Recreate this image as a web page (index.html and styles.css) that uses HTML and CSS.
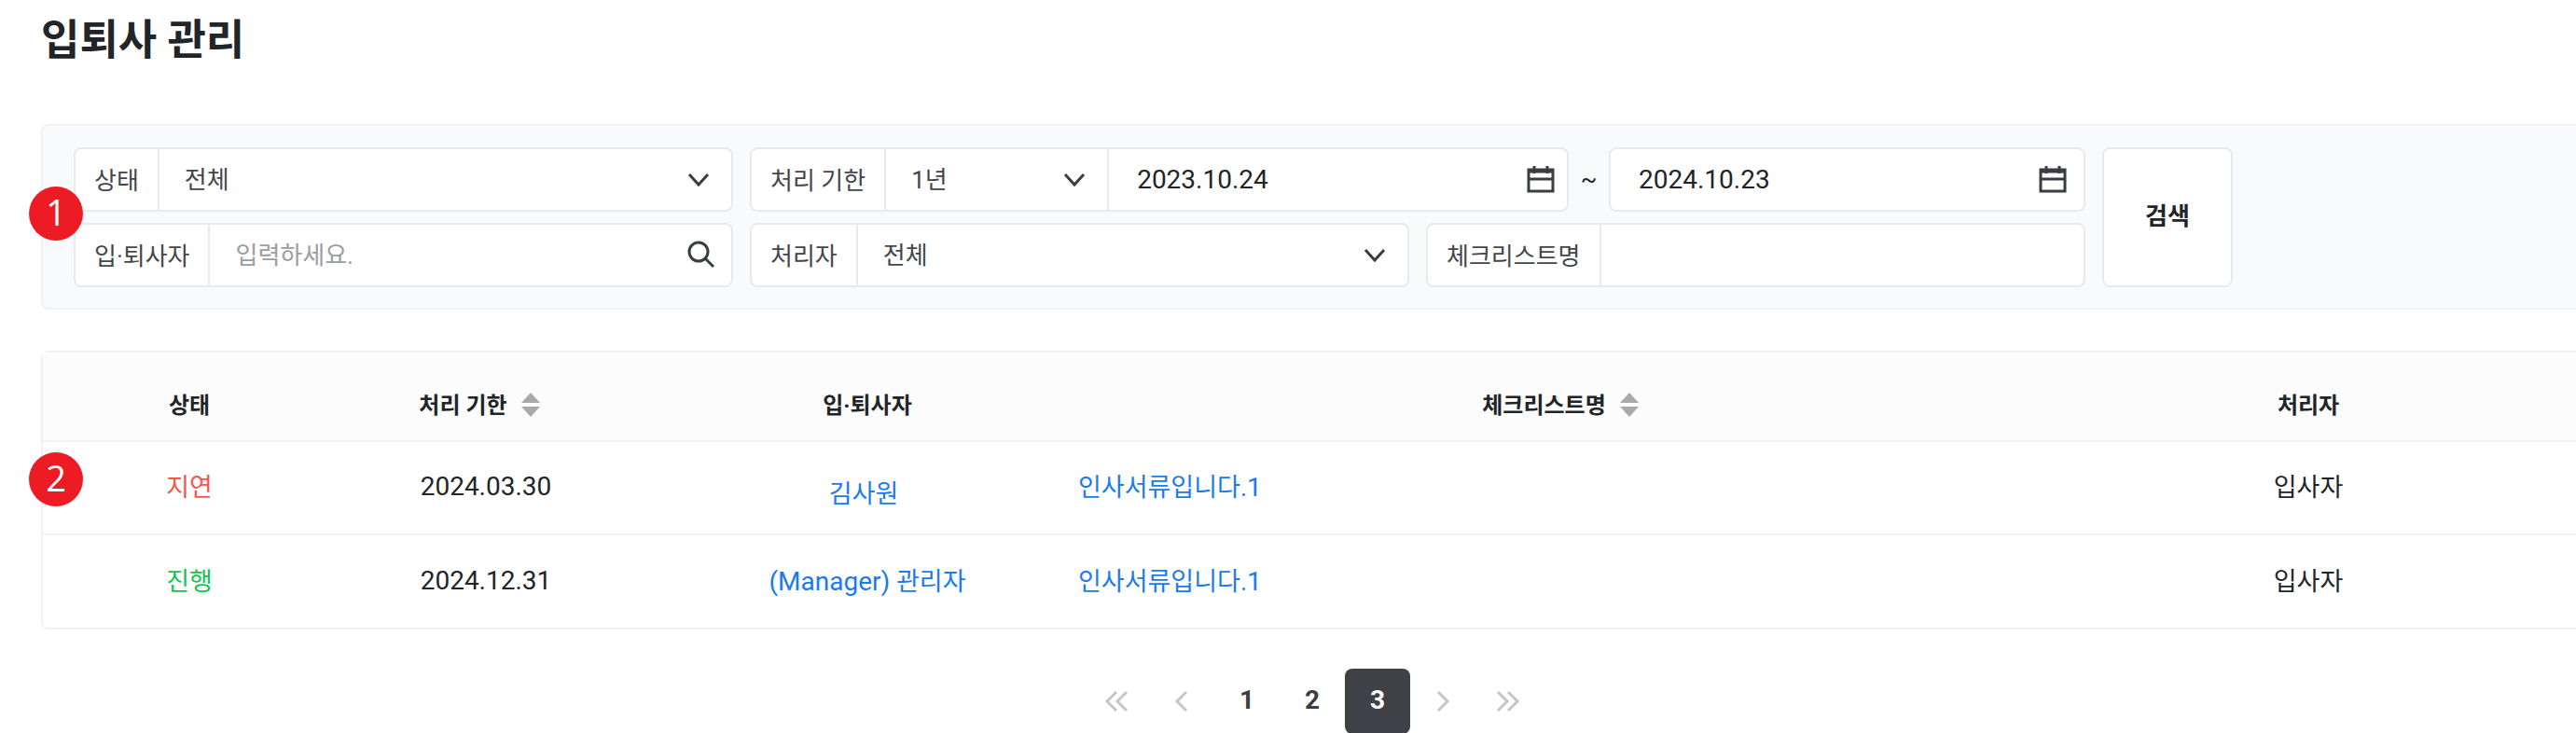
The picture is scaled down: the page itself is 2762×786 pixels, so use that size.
FILE: index.html
```html
<!DOCTYPE html>
<html lang="ko">
<head>
  <meta charset="UTF-8" />
  <meta name="viewport" content="width=device-width, initial-scale=1.0"/>
  <title>입퇴사 관리</title>
  <link rel="stylesheet" href="styles.css">
</head>
<body>

  <main class="page">
    <h1>입퇴사 관리</h1>

    <!-- Search filter -->
    <form class="filter">
      <span class="badge">1</span>
      <div class="filter-grid">
        <div class="field">
          <label for="status">상태</label>
          <div class="control">
            <select id="status"><option>전체</option></select>
            <svg class="chevron" viewBox="0 0 24 24"><path d="M2 6l10 11L22 6"/></svg>
          </div>
        </div>

        <div class="period">
          <div class="field">
            <label for="period">처리 기한</label>
            <div class="control period-select">
              <select id="period"><option>1년</option></select>
              <svg class="chevron" viewBox="0 0 24 24"><path d="M2 6l10 11L22 6"/></svg>
            </div>
            <div class="control">
              <input class="date" type="text" value="2023.10.24" aria-label="시작일">
              <svg class="calendar" viewBox="0 0 32 32"><path d="M3 5h26v23H3zM3 15h26M9 1v8M23 1v8M3 7h26"/></svg>
            </div>
          </div>
          <span class="tilde">~</span>
          <div class="field end-date">
            <div class="control">
              <input class="date" type="text" value="2024.10.23" aria-label="종료일">
              <svg class="calendar" viewBox="0 0 32 32"><path d="M3 5h26v23H3zM3 15h26M9 1v8M23 1v8M3 7h26"/></svg>
            </div>
          </div>
        </div>

        <div class="field">
          <label for="employee">입·퇴사자</label>
          <div class="control">
            <input id="employee" type="text" placeholder="입력하세요.">
            <svg class="search" viewBox="0 0 32 32"><circle cx="14" cy="12" r="10"/><path d="M21 19l9 9"/></svg>
          </div>
        </div>

        <div class="field">
          <label for="handler">처리자</label>
          <div class="control">
            <select id="handler"><option>전체</option></select>
            <svg class="chevron" viewBox="0 0 24 24"><path d="M2 6l10 11L22 6"/></svg>
          </div>
        </div>

        <div class="field">
          <label for="checklist">체크리스트명</label>
          <div class="control">
            <input id="checklist" type="text">
          </div>
        </div>
      </div>
      <button class="search-btn" type="button">검색</button>
    </form>

    <!-- Result list -->
    <div class="list">
      <span class="badge">2</span>
      <table>
        <colgroup>
          <col class="col-status">
          <col class="col-date">
          <col class="col-name">
          <col>
          <col class="col-handler">
        </colgroup>
        <thead>
          <tr>
            <th>상태</th>
            <th class="due">처리 기한<svg class="sort" viewBox="0 0 20 26"><path d="M10 0l10 11H0zM10 26l10-11H0z"/></svg></th>
            <th>입·퇴사자</th>
            <th>체크리스트명<svg class="sort" viewBox="0 0 20 26"><path d="M10 0l10 11H0zM10 26l10-11H0z"/></svg></th>
            <th>처리자</th>
          </tr>
        </thead>
        <tbody>
          <tr>
            <td class="late">지연</td>
            <td class="num">2024.03.30</td>
            <td class="name"><a href="#">김사원</a></td>
            <td class="title"><a href="#">인사서류입니다.<span class="num">1</span></a></td>
            <td>입사자</td>
          </tr>
          <tr>
            <td class="progress">진행</td>
            <td class="num">2024.12.31</td>
            <td><a href="#"><span class="num">(Manager)</span> 관리자</a></td>
            <td class="title"><a href="#">인사서류입니다.<span class="num">1</span></a></td>
            <td>입사자</td>
          </tr>
        </tbody>
      </table>
    </div>

    <!-- Pagination -->
    <nav class="paging" aria-label="페이지">
      <button type="button" aria-label="처음"><svg viewBox="0 0 26 24"><path d="M13 2L3 12l10 10M24 2L14 12l10 10"/></svg></button>
      <button type="button" aria-label="이전"><svg viewBox="0 0 26 24"><path d="M18 2L8 12l10 10"/></svg></button>
      <button type="button">1</button>
      <button type="button">2</button>
      <button type="button" class="active">3</button>
      <button type="button" aria-label="다음"><svg viewBox="0 0 26 24"><path d="M8 2l10 10L8 22"/></svg></button>
      <button type="button" aria-label="마지막"><svg viewBox="0 0 26 24"><path d="M2 2l10 10L2 22M13 2l10 10-10 10"/></svg></button>
    </nav>
  </main>

</body>
</html>
```
FILE: styles.css
```css
* { margin: 0; padding: 0; box-sizing: border-box; }
body {
  font-family: Roboto, "Noto Sans CJK KR", sans-serif;
  font-size: 26px;
  color: #212529;
  background: #fff;
  overflow: hidden;
}
a { color: #1a7af0; text-decoration: none; }
svg { fill: none; stroke: #3a3d42; stroke-width: 3; }

.page {
  padding-left: 44px;
  margin-right: -8px;
}

h1 {
  font-size: 45px;
  line-height: 68px;
  padding-top: 10px;
  margin-bottom: 55px;
}

/* Numbered markers on the left edge */
.badge {
  position: absolute;
  left: -15px;
  width: 58px;
  height: 58px;
  border-radius: 50%;
  background: #ed1c24;
  color: #fff;
  font-family: "Open Sans", sans-serif;
  font-size: 38px;
  line-height: 54px;
  text-align: center;
}

.filter {
  position: relative;
  display: flex;
  gap: 18px;
  padding: 23px 33px 22px;
  border: 2px solid #f1f2f8;
  border-radius: 8px;
  background: #f9fafc;
}
.filter .badge { top: 65px; }

.filter-grid {
  flex: 1;
  max-width: 2157px;
  display: grid;
  grid-template-columns: repeat(3, 1fr);
  gap: 12px 18px;
}

.field {
  flex: 1;
  display: flex;
  height: 69px;
  background: #fff;
  border: 2px solid #e9eaed;
  border-radius: 8px;
  overflow: hidden;
}
.field label {
  display: flex;
  align-items: center;
  padding: 0 20px 2px;
  color: #43464b;
  white-space: nowrap;
}

.control {
  flex: 1;
  display: flex;
  align-items: center;
  position: relative;
  min-width: 0;
}
label + .control, .control + .control { border-left: 2px solid #e9eaed; }
.control select, .control input {
  width: 100%;
  height: 100%;
  padding: 0 60px 0 27px;
  border: 0;
  background: transparent;
  appearance: none;
  outline: none;
  font: inherit;
  color: #43464b;
}
.control input.date {
  padding-left: 30px;
  font-size: 28px;
  color: #212529;
}
.control input::placeholder { color: #9a9da1; }
.control svg { position: absolute; pointer-events: none; }
.chevron { width: 24px; right: 23px; }
.calendar { width: 32px; right: 12px; }
.end-date .calendar { right: 17px; }
.search { width: 32px; right: 17px; }

.period { grid-column: span 2; display: flex; }
.period-select { flex: 0 0 239px; }
.tilde { width: 43px; text-align: center; line-height: 69px; }
.end-date { flex: 0 0 511px; }

.search-btn {
  width: 140px;
  padding-bottom: 8px;
  background: #fff;
  border: 2px solid #e9eaed;
  border-radius: 8px;
  font: inherit;
  font-weight: bold;
  color: #212529;
}

.list {
  position: relative;
  margin-top: 44px;
  border: 2px solid #f1f2f8;
  border-radius: 8px;
}
.list .badge { top: 107px; }

table {
  width: 100%;
  table-layout: fixed;
  border-collapse: collapse;
  text-align: center;
}
.col-status { width: 265px; }
.col-date { width: 420px; }
.col-name { width: 398px; }
.col-handler { width: 551px; }
th {
  height: 95px;
  padding-top: 14px;
  background: #fcfcfd;
  font-size: 24px;
}
th.due { padding-right: 14px; }
td { height: 100px; padding-bottom: 5px; font-size: 27px; }
.num { font-size: 28px; }
td.num { padding-bottom: 3px; }
tbody tr { border-top: 2px solid #f1f2f8; }
th:first-child, td:first-child { padding-left: 49px; }
th:last-child, td:last-child { padding-right: 35px; }
td.title { text-align: left; padding-left: 27px; }
td.name { padding: 9px 8px 0 0; }
.late { color: #f8544b; }
.progress { color: #12c455; }

.sort {
  width: 20px;
  height: 26px;
  margin-left: 15px;
  vertical-align: -4px;
  fill: #a9a9a9;
  stroke: none;
}

.paging {
  display: flex;
  justify-content: center;
  margin-top: 42px;
}
.paging button {
  width: 70px;
  height: 70px;
  padding-bottom: 4px;
  border: 0;
  border-radius: 8px;
  background: none;
  font: inherit;
  font-size: 28px;
  font-weight: bold;
  color: #3a3d42;
}
.paging .active { background: #3f4146; color: #fff; }
.paging svg { width: 26px; height: 24px; stroke: #c6c6ca; vertical-align: middle; }
```
